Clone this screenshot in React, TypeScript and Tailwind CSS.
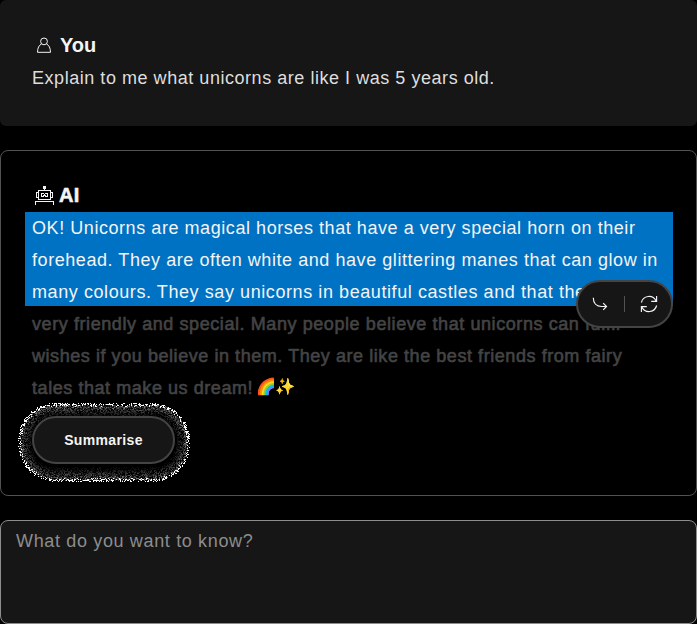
import React from "react";

const fontStack = "font-['Liberation_Sans',Arial,sans-serif]";

// Repeatable noise in the range 0..1 for the grain round the button.
function noise(x: number, y: number, seed: number) {
  let h = (x * 374761393 + y * 668265263 + seed * 2147483647) | 0;
  h = Math.imul(h ^ (h >>> 13), 1274126177);
  h = Math.imul(h ^ (h >>> 16), 2246822519);
  return ((h ^ (h >>> 15)) >>> 0) / 4294967296;
}

const SHADES = ["#101010", "#242424", "#383838", "#505050", "#747474", "#ffffff"];
const WIDTH = 172;
const HEIGHT = 79;
const RADIUS = 37;

function buildGrain() {
  const paths = SHADES.map(() => "");
  for (let y = 0; y < HEIGHT; y++) {
    for (let x = 0; x < WIDTH; x++) {
      const dx = Math.max(Math.abs(x + 0.5 - WIDTH / 2) - (WIDTH / 2 - RADIUS), 0);
      const dy = Math.max(Math.abs(y + 0.5 - HEIGHT / 2) - (HEIGHT / 2 - RADIUS), 0);
      const inset = RADIUS - Math.hypot(dx, dy);
      if (inset < 0 || inset > 18) continue;
      const n = noise(x, y, 1);
      const edge = inset + (noise(x, y, 2) - 0.5) * 3;
      let shade = -1;
      if (edge < 0.8) continue;
      if (edge < 2.5) shade = n > 0.25 ? 5 : -1;
      else if (n > 0.2) shade = Math.min(4, Math.floor((1 - inset / 17) * n * 8) - 1);
      if (shade >= 0) paths[shade] += `M${x} ${y}h1v1h-1z`;
    }
  }
  return paths;
}

const grain = buildGrain();

function Grain() {
  return (
    <svg className="pointer-events-none absolute -left-3.5 -top-[13px] h-[79px] w-[172px] max-w-none" viewBox="0 0 172 79" shapeRendering="crispEdges" aria-hidden="true">
      {grain.map((d, i) => (
        <path key={i} d={d} fill={SHADES[i]} />
      ))}
    </svg>
  );
}

function UserIcon() {
  return (
    <svg className="h-4 w-4" viewBox="0 0 16 16" fill="none" stroke="#f4f4f4" aria-hidden="true">
      <circle cx="8" cy="4.4" r="3.4" />
      <path d="M5.5 6.9C3 8.3 1.5 11 1.5 15.3h13C14.5 11 13 8.3 10.5 6.9" />
    </svg>
  );
}

function RobotIcon() {
  return (
    <svg className="h-5 w-5" viewBox="0 0 20 20" fill="#f4f4f4" shapeRendering="crispEdges" aria-hidden="true">
      <path d="M8 1h3v3H8zM9 4h1v1H9zM3 5h13v1H3zM3 6h1v9H3zM15 6h1v9h-1zM3 14h13v1H3zM1 7h2v1H1zM1 8h1v4H1zM1 12h2v1H1zM16 7h2v1h-2zM17 8h1v4h-1zM16 12h2v1h-2zM6 8h3v1H6zM6 9h1v2H6zM10 8h3v1h-3zM12 9h1v2h-1zM6 11h3v1H6zM10 11h3v1h-3zM9 9h1v2H9zM8 10h3v1H8zM0 16h19v1H0zM0 17h1v3H0zM18 17h1v3h-1z" />
    </svg>
  );
}

function ReplyIcon() {
  return (
    <svg className="h-4 w-4" viewBox="0 0 16 16" fill="none" stroke="#f4f4f4" strokeWidth="1.2" aria-hidden="true">
      <path d="M1.3 1.8C1.3 7 4.5 10.5 9.5 10.5h5M11.2 7.2l3.3 3.3-3.3 3.3" />
    </svg>
  );
}

function RefreshIcon() {
  return (
    <svg className="h-[18px] w-[18px]" viewBox="0 0 18 18" fill="none" stroke="#f4f4f4" strokeWidth="1.15" aria-hidden="true">
      <path d="M1.4 7.5A7.8 7.8 0 0 1 16 5.8M16.6 1v5.4h-5.4M16.6 10.5A7.8 7.8 0 0 1 2 12.2M1.4 17v-5.4h5.4" />
    </svg>
  );
}

export default function App() {
  return (
    <div className={`flex h-[624px] w-[697px] flex-col gap-6 overflow-hidden bg-black text-[18px] leading-8 tracking-[0.56px] text-[#f4f4f4] ${fontStack}`}>
      <section className="h-[126px] shrink-0 rounded-md bg-[#161616] px-8 pt-[29px]">
        <div className="mb-px flex items-center gap-2 pl-1">
          <UserIcon />
          <h2 className="text-[20px] font-bold tracking-normal">You</h2>
        </div>
        <p className="whitespace-nowrap tracking-[0.54px] text-[#dedede]">Explain to me what unicorns are like I was 5 years old.</p>
      </section>

      <section className="h-[346px] shrink-0 rounded-lg border border-[#525252] pl-6 pr-[23px] pt-7">
        <div className="mb-px flex h-8 items-center gap-1 pl-[10px]">
          <RobotIcon />
          <h2 className="text-[20px] font-bold tracking-[0.3px] [-webkit-text-stroke:0.6px_#f4f4f4]">AI</h2>
        </div>
        <div className="relative">
          <div className="h-[94px] whitespace-nowrap bg-[#0072c3] pl-[7px]">
            <p>OK! Unicorns are magical horses that have a very special horn on their</p>
            <p>forehead. They are often white and have glittering manes that can glow in</p>
            <p className="tracking-[0.58px]">many colours. They say unicorns in beautiful castles and that they are</p>
          </div>
          <div className="whitespace-nowrap pl-[7px] pt-[2px] text-[#444444] [-webkit-text-stroke:0.6px_#444444]">
            <p className="tracking-[0.58px]">very friendly and special. Many people believe that unicorns can fulfil</p>
            <p>wishes if you believe in them. They are like the best friends from fairy</p>
            <p className="h-8">
              tales that make us dream!<span className="relative -top-0.5 ml-[3px] text-[16px] leading-none tracking-[-1px]">🌈✨</span>
            </p>
          </div>
          <div className="absolute right-0 top-[68px] flex h-12 w-[97px] items-center justify-between rounded-full border-2 border-[#444444] bg-[#161616] pl-[14px] pr-[13px]">
            <ReplyIcon />
            <span className="h-4 w-px bg-[#525252]" />
            <RefreshIcon />
          </div>
        </div>
        <div className="relative ml-[7px] mt-3 h-12 w-[143px]">
          <Grain />
          <button className="relative block h-12 w-[143px] rounded-full border-2 border-[#444444] bg-[#161616] pb-px text-[14px] font-bold leading-8 tracking-[0.35px]">
            Summarise
          </button>
        </div>
      </section>

      <textarea
        className="h-[104px] shrink-0 resize-none rounded-lg border border-[#8d8d8d] bg-[#161616] px-[15px] py-1 leading-8 tracking-[0.65px] outline-none placeholder:text-[#8d8d8d]"
        placeholder="What do you want to know?"
      />
    </div>
  );
}
